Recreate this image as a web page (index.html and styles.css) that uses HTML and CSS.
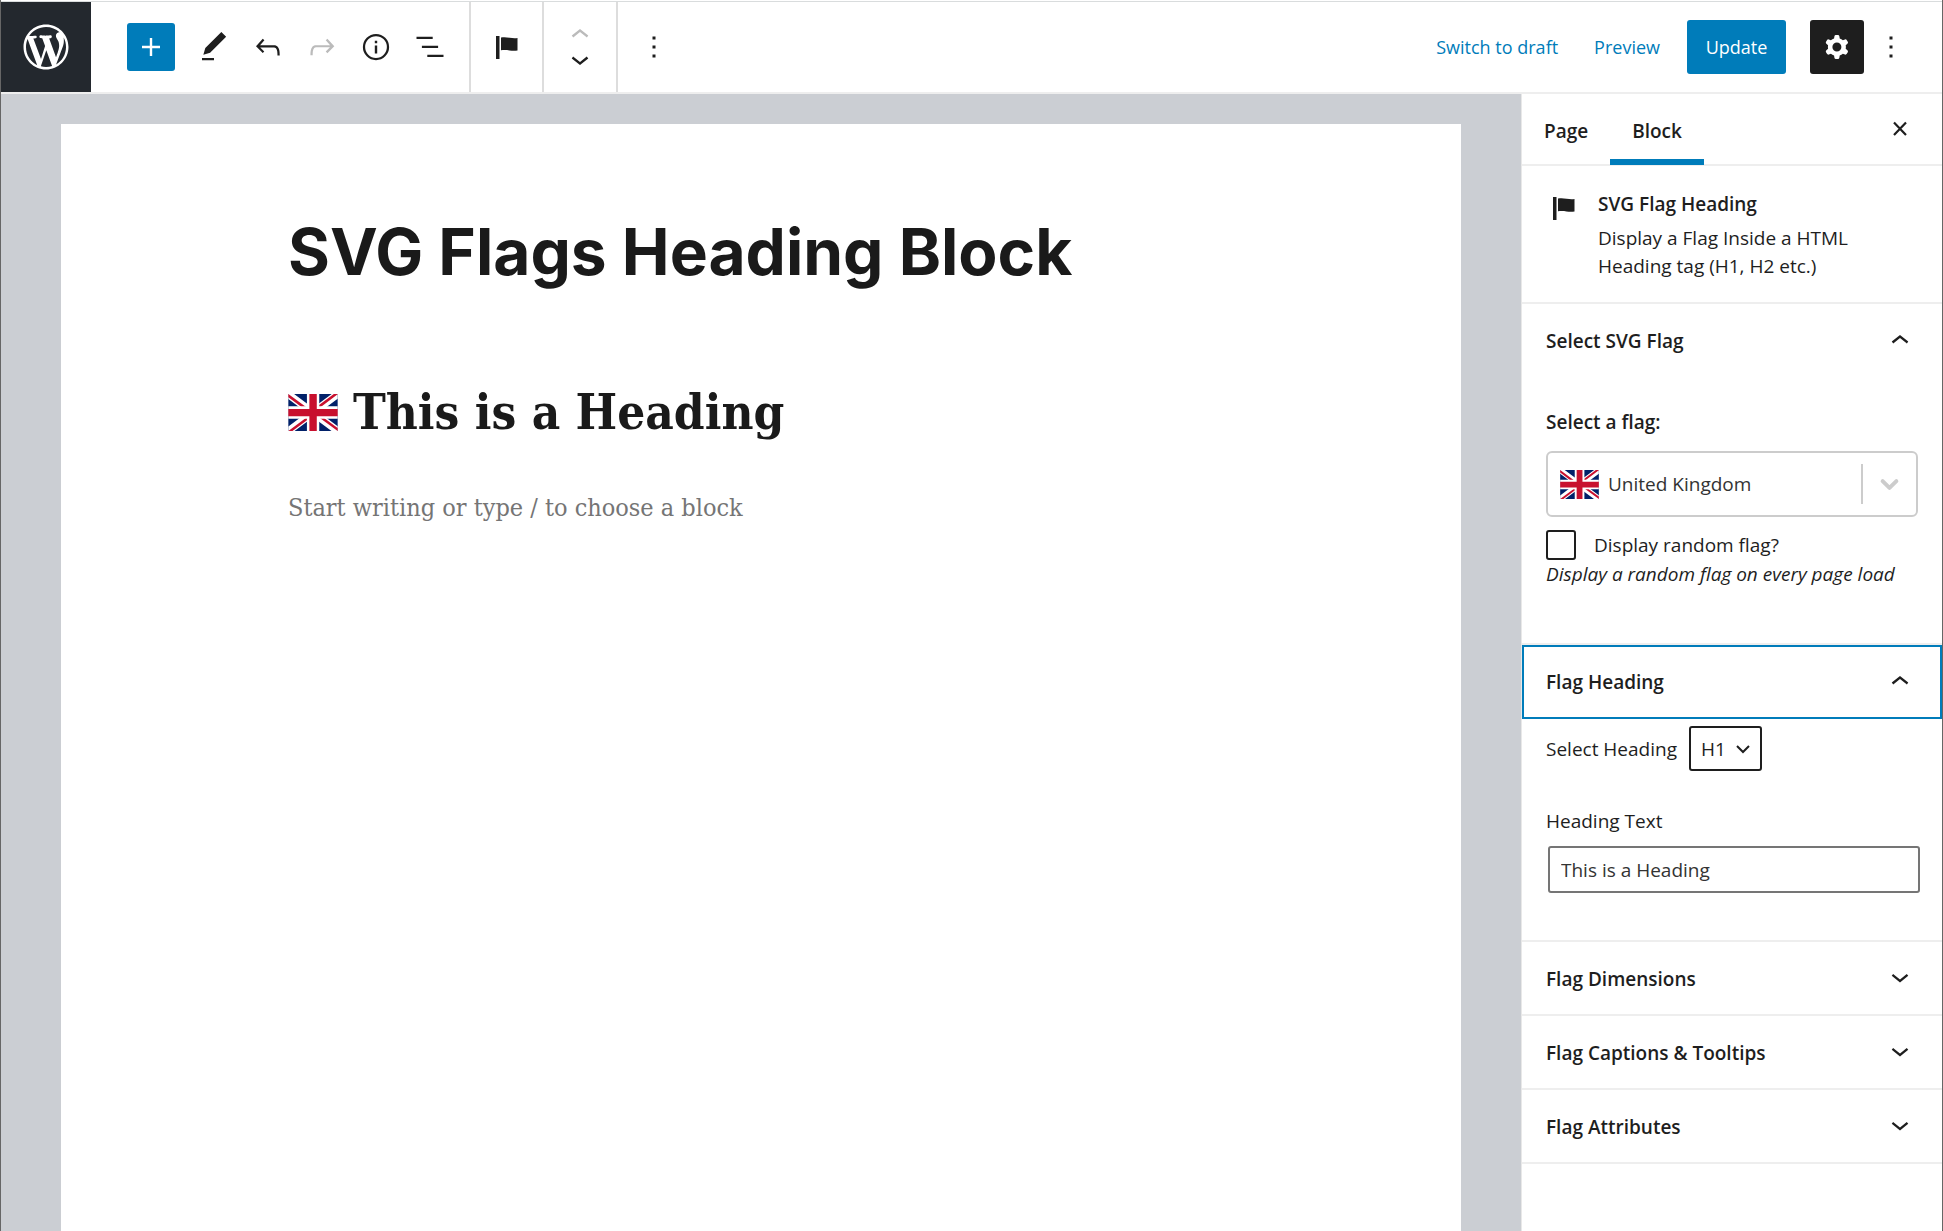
FILE: index.html
```html
<!DOCTYPE html>
<html lang="en">
<head>
<meta charset="utf-8">
<title>Edit Page</title>
<link rel="stylesheet" href="styles.css">
</head>
<body>
<svg class="defs" aria-hidden="true">
  <symbol id="up" viewBox="0 0 24 24"><path d="M6.500 12.400L12 8l5.500 4.400-.9 1.200L12 10l-4.500 3.600-1-1.200z"/></symbol>
  <symbol id="down" viewBox="0 0 24 24"><path d="M17.500 9.900L12 14.300 6.500 9.900l.9-1.200 4.600 3.600 4.500-3.600 1 1.200z"/></symbol>
  <symbol id="more" viewBox="0 0 24 24"><path d="M13 19h-2v-2h2v2zm0-6h-2v-2h2v2zm0-6h-2V5h2v2z"/></symbol>
  <symbol id="flag" viewBox="0 0 36 36"><path d="M7 7h3.500v23H7zM12 8.500c3-.6 5.500-.3 8.500.200s5.500.6 8 .300v12.500c-3 .5-5.500.3-8-.1s-5.500-.6-8.500-.2z"/></symbol>
  <symbol id="uk" viewBox="0 0 640 480">
    <path fill="#012169" d="M0 0h640v480H0z"/>
    <path fill="#fff" d="M75 0l244 181L562 0h78v62L400 241l240 178v61h-80L320 301 81 480H0v-60l239-178L0 64V0h75z"/>
    <path fill="#c8102e" d="M424 281l216 159v40L369 281h55zm-184 20l6 35L54 480H0l240-179zM640 0v3L391 191l2-44L590 0h50zM0 0l239 176h-60L0 42V0z"/>
    <path fill="#fff" d="M241 0v480h160V0H241zM0 160v160h640V160H0z"/>
    <path fill="#c8102e" d="M0 193v96h640v-96H0zM273 0v480h96V0h-96z"/>
  </symbol>
</svg>
<div class="app">
  <header class="header">
    <a class="logo" href="#" aria-label="View pages">
      <svg viewBox="-2 -2 24 24"><path d="M20 10c0-5.51-4.49-10-10-10C4.480 0 0 4.490 0 10c0 5.520 4.480 10 10 10 5.510 0 10-4.480 10-10zM7.780 15.370L4.370 6.220c.55-.02 1.170-.08 1.170-.08.5-.06.44-1.130-.06-1.110 0 0-1.450.11-2.370.11-.18 0-.37 0-.58-.01C4.120 2.690 6.870 1.110 10 1.110c2.330 0 4.450.87 6.050 2.340-.68-.11-1.650.39-1.650 1.580 0 .74.45 1.360.9 2.100.35.61.55 1.360.55 2.460 0 1.490-1.400 5-1.400 5l-3.030-8.370c.54-.02.82-.17.82-.17.5-.05.44-1.250-.06-1.220 0 0-1.440.12-2.380.12-.87 0-2.330-.12-2.330-.12-.5-.03-.56 1.200-.06 1.220l.92.08 1.260 3.410zM17.410 10c.24-.64.74-1.870.43-4.250.7 1.290 1.050 2.710 1.050 4.250 0 3.290-1.730 6.240-4.400 7.780.97-2.590 1.940-5.200 2.920-7.780zM6.100 18.090C3.120 16.650 1.110 13.530 1.110 10c0-1.300.23-2.480.72-3.590C3.250 10.300 4.670 14.200 6.100 18.090zm4.030-6.630l2.580 6.980c-.86.29-1.760.45-2.710.45-.79 0-1.570-.11-2.290-.33.81-2.380 1.620-4.740 2.420-7.100z"/></svg>
    </a>
    <div class="tools">
      <button class="add" aria-label="Add block"><svg class="icon" viewBox="0 0 24 24"><path d="M18 11.200h-5.200V6h-1.600v5.200H6v1.600h5.200V18h1.600v-5.200H18z"/></svg></button>
      <button class="tool" aria-label="Tools"><svg class="icon" viewBox="0 0 24 24"><path d="M20.100 5.100L16.900 2 6.200 12.700l-1.300 4.400 4.500-1.300L20.100 5.100zM4 20.800h8v-1.500H4v1.500z"/></svg></button>
      <button class="tool" aria-label="Undo"><svg class="icon" viewBox="0 0 24 24"><path d="M18.300 11.700c-.6-.6-1.400-.9-2.300-.9H6.700l2.900-3.300-1.100-1-4.500 5L8.500 16l1-1-2.700-2.700H16c.5 0 .9.2 1.300.5 1 1 1 3.400 1 4.500v.3h1.500v-.2c0-1.500 0-4.300-1.500-5.700z"/></svg></button>
      <button class="tool" aria-label="Redo" disabled><svg class="icon" viewBox="0 0 24 24"><path d="M15.600 6.500l-1.100 1 2.900 3.300H8c-.9 0-1.700.3-2.300.9-1.400 1.500-1.400 4.200-1.400 5.600v.2h1.500v-.3c0-1.100 0-3.500 1-4.500.3-.3.7-.5 1.300-.5h9.200L14.500 15l1.100 1.100 4.600-4.600-4.600-5z"/></svg></button>
      <button class="tool" aria-label="Details"><svg class="icon" viewBox="0 0 24 24"><circle cx="12" cy="12" r="8" fill="none" stroke="currentColor" stroke-width="1.500"/><path d="M11.200 11h1.600v5.300h-1.600zM11.200 7.800h1.600v1.700h-1.600z"/></svg></button>
      <button class="tool" aria-label="Outline"><svg class="icon" viewBox="0 0 24 24"><path d="M13.800 5.200H3v1.500h10.800V5.200zm-3.600 12v1.500H21v-1.500H10.200zm7.200-6H6.600v1.500h10.800v-1.500z"/></svg></button>
    </div>
    <div class="block-tools">
      <button class="cell type" aria-label="Change block type"><svg class="icon"><use href="#flag"/></svg></button>
      <div class="cell">
        <button class="move" aria-label="Move up" disabled><svg viewBox="0 4 24 16"><path d="M6.500 12.400L12 8l5.500 4.400-.9 1.200L12 10l-4.500 3.600-1-1.200z"/></svg></button>
        <button class="move" aria-label="Move down"><svg viewBox="0 4 24 16"><path d="M17.500 11.600L12 16l-5.500-4.400.9-1.200L12 14l4.500-3.600 1 1.200z"/></svg></button>
      </div>
      <button class="cell" aria-label="More options"><svg class="icon"><use href="#more"/></svg></button>
    </div>
    <div class="actions">
      <button class="link">Switch to draft</button>
      <button class="link">Preview</button>
      <button class="update">Update</button>
      <button class="settings" aria-label="Settings"><svg class="icon" viewBox="0 0 24 24"><path fill-rule="evenodd" d="M10.289 4.836A1 1 0 0111.275 4h1.306a1 1 0 01.987.836l.244 1.466c.787.26 1.503.679 2.108 1.218l1.393-.522a1 1 0 011.216.437l.653 1.130a1 1 0 01-.23 1.273l-1.148.944a6.025 6.025 0 010 2.435l1.149.946a1 1 0 01.23 1.272l-.653 1.130a1 1 0 01-1.216.437l-1.394-.522c-.605.54-1.320.958-2.108 1.218l-.244 1.466a1 1 0 01-.987.836h-1.306a1 1 0 01-.986-.836l-.244-1.466a5.995 5.995 0 01-2.108-1.218l-1.394.522a1 1 0 01-1.217-.436l-.653-1.131a1 1 0 01.23-1.272l1.149-.946a6.026 6.026 0 010-2.435l-1.148-.944a1 1 0 01-.23-1.272l.653-1.131a1 1 0 011.217-.437l1.393.522a5.994 5.994 0 012.108-1.218l.244-1.466zM14.929 12a3 3 0 11-6 0 3 3 0 016 0z"/></svg></button>
      <button class="options" aria-label="Options"><svg class="icon"><use href="#more"/></svg></button>
    </div>
  </header>
  <div class="body">
    <main class="stage">
      <article class="page">
        <div class="column">
          <h1 class="title">SVG Flags Heading Block</h1>
          <h2 class="heading"><svg class="heading-flag"><use href="#uk"/></svg>This is a Heading</h2>
          <input class="prompt" type="text" aria-label="Add block" placeholder="Start writing or type / to choose a block">
        </div>
      </article>
    </main>
    <aside class="sidebar">
      <div class="tabs">
        <button class="tab">Page</button>
        <button class="tab active">Block</button>
        <button class="close" aria-label="Close settings"><svg class="icon" viewBox="0 0 36 36"><path fill="none" stroke="currentColor" stroke-width="2.200" d="M12 11.500l12 12.500M24 11.500L12 24"/></svg></button>
      </div>
      <section class="card">
        <svg class="icon"><use href="#flag"/></svg>
        <div>
          <h2 class="card-title">SVG Flag Heading</h2>
          <p class="card-text">Display a Flag Inside a HTML Heading tag (H1, H2 etc.)</p>
        </div>
      </section>
      <section class="panel">
        <button class="toggle">Select SVG Flag<svg class="icon"><use href="#up"/></svg></button>
        <div class="flag-fields">
          <label class="strong" for="country">Select a flag:</label>
          <div class="country">
            <svg class="country-flag"><use href="#uk"/></svg>
            <select id="country"><option>United Kingdom</option></select>
            <svg class="country-arrow" viewBox="0 0 54 40"><path fill="none" stroke="currentColor" stroke-width="4" stroke-linecap="round" stroke-linejoin="round" d="M20 17l7 7 7-7"/></svg>
          </div>
          <label class="check"><input type="checkbox">Display random flag?</label>
          <p class="help">Display a random flag on every page load</p>
        </div>
      </section>
      <section class="panel">
        <button class="toggle focused">Flag Heading<svg class="icon"><use href="#up"/></svg></button>
        <div class="heading-fields">
          <div class="level">
            <label for="level">Select Heading</label>
            <span class="level-box">
              <select id="level"><option>H1</option></select>
              <svg class="level-arrow" viewBox="0 0 14 10"><path fill="none" stroke="currentColor" stroke-width="2" d="M1 2l6 6 6-6"/></svg>
            </span>
          </div>
          <label class="text-label" for="text">Heading Text</label>
          <input class="text" id="text" type="text" value="This is a Heading">
        </div>
      </section>
      <section class="panel"><button class="toggle">Flag Dimensions<svg class="icon"><use href="#down"/></svg></button></section>
      <section class="panel"><button class="toggle">Flag Captions &amp; Tooltips<svg class="icon"><use href="#down"/></svg></button></section>
      <section class="panel"><button class="toggle">Flag Attributes<svg class="icon"><use href="#down"/></svg></button></section>
    </aside>
  </div>
</div>
</body>
</html>
```
FILE: styles.css
```css
* { box-sizing: border-box; }

body {
  margin: 0;
  background: #fff;
  color: #1e1e1e;
  font: 19px/28px "Open Sans", "Noto Sans", sans-serif;
}

h1, h2, p { margin: 0; }

button, input, select { font: inherit; color: inherit; }

button {
  display: flex;
  align-items: center;
  justify-content: center;
  padding: 0;
  border: 0;
  background: none;
}

svg { display: block; fill: currentColor; flex: none; }

.defs { display: none; }
.icon { width: 36px; height: 36px; }

.app {
  display: flex;
  flex-direction: column;
  min-height: 100vh;
  padding-top: 1px;
  border-right: 1px solid #666;
  border-left: 1px solid #666;
}

/* Top bar */
.header {
  display: flex;
  height: 93px;
  border-top: 1px solid #d9dcdd;
  border-bottom: 2px solid #eee;
}

.logo {
  display: flex;
  align-items: center;
  justify-content: center;
  width: 90px;
  background: #23282e;
  color: #fff;
}
.logo svg { width: 54px; height: 54px; }

.tools {
  display: flex;
  align-items: center;
  gap: 18px;
  padding: 0 21px 0 36px;
}
.add {
  width: 48px;
  height: 48px;
  margin-right: 3px;
  border-radius: 3px;
  background: #007cba;
  color: #fff;
}
button:disabled { color: #bbb; }

.block-tools { display: flex; }
.cell {
  display: flex;
  flex-direction: column;
  align-items: center;
  justify-content: center;
  width: 74px;
  border-left: 2px solid #ddd;
}
.type { width: 73px; }
.move svg { width: 36px; height: 24px; }

.actions {
  display: flex;
  align-items: center;
  margin-left: auto;
  padding-right: 33px;
}
.link { margin-right: 36px; color: #007cba; font-size: 18px; }
.update, .settings { height: 54px; border-radius: 3px; color: #fff; }
.update { width: 99px; margin-left: -9px; background: #007cba; font-size: 18px; }
.settings { width: 54px; margin: 0 9px 0 24px; background: #1e1e1e; }

/* Editing area */
.body { display: flex; flex: 1; }
.stage {
  display: flex;
  flex: 1;
  min-width: 0;
  padding: 30px 60px 0;
  background: #cbced3;
}
.page { flex: 1; min-width: 0; background: #fff; }
.column { max-width: 946px; margin: 0 auto; padding-top: 88px; }
.title {
  font: 700 64px/80px Inter, sans-serif;
  color: #1a1a1a;
}
.heading {
  display: flex;
  align-items: center;
  gap: 15px;
  margin-top: 80px;
  font: 700 49px/80px "DejaVu Serif Condensed", "DejaVu Serif", serif;
  color: #1a1a1a;
}
.heading-flag { width: 50px; height: 37px; }
.prompt {
  width: 100%;
  height: 48px;
  margin-top: 32px;
  padding: 0;
  border: 0;
  font: 25px/48px "DejaVu Serif Condensed", "DejaVu Serif", serif;
}
.prompt::placeholder { color: #757575; opacity: 1; }

/* Settings sidebar */
.sidebar {
  width: 421px;
  border-left: 1px solid #e8e8e8;
  background: #fff;
}
.tabs {
  display: flex;
  height: 72px;
  border-bottom: 2px solid #eee;
}
.tab { padding: 2px 22px 0; height: 71px; font-weight: 600; }
.active { box-shadow: inset 0 -6px #007cba; }
.close { margin: 0 24px 0 auto; }

.card {
  display: flex;
  gap: 16px;
  height: 138px;
  padding: 24px;
  border-bottom: 2px solid #eee;
}
.card-title { font-size: 19px; line-height: 28px; font-weight: 600; }
.card-text { margin-top: 6px; max-width: 270px; }

.panel { border-bottom: 2px solid #eee; }
.toggle {
  justify-content: space-between;
  width: 100%;
  height: 72px;
  padding: 2px 24px 0;
  font-weight: 600;
}
.focused { height: 74px; border: 2px solid #007cba; padding: 0 22px; }

.flag-fields { padding: 32px 24px 55px; }
.strong { display: block; font-weight: 600; }
.country {
  display: flex;
  align-items: center;
  height: 66px;
  margin-top: 15px;
  padding-left: 12px;
  border: 2px solid #ccc;
  border-radius: 6px;
}
.country-flag { width: 39px; height: 29px; }
.country select {
  flex: 1;
  min-width: 0;
  padding: 0 0 0 9px;
  border: 0;
  background: none;
  appearance: none;
  color: #333;
}
.country-arrow {
  width: 55px;
  height: 40px;
  border-left: 2px solid #ccc;
  color: #ccc;
}
.check { display: flex; align-items: center; gap: 18px; margin-top: 13px; }
.check input {
  width: 30px;
  height: 30px;
  margin: 0;
  border: 2px solid #1e1e1e;
  border-radius: 3px;
  appearance: none;
}
.help { font-style: italic; }

.heading-fields { padding: 7px 24px 47px; }
.level { display: flex; gap: 12px; align-items: center; }
.level-box {
  display: grid;
  align-items: center;
  width: 73px;
  height: 45px;
}
.level-box select {
  grid-area: 1 / 1;
  width: 100%;
  height: 100%;
  padding: 0 0 0 10px;
  border: 2px solid #1e1e1e;
  border-radius: 3px;
  background: none;
  appearance: none;
}
.level-arrow {
  grid-area: 1 / 1;
  justify-self: end;
  width: 14px;
  height: 10px;
  margin-right: 12px;
  pointer-events: none;
}
.text-label { display: block; margin-top: 36px; }
.text {
  display: block;
  width: 372px;
  height: 47px;
  margin: 11px 0 0 2px;
  padding: 0 11px;
  border: 2px solid #757575;
  border-radius: 3px;
  color: #333;
}
```
